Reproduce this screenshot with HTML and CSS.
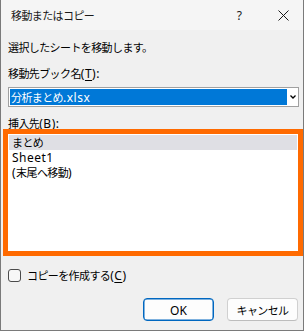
FILE: index.html
```html
<!DOCTYPE html>
<html lang="ja">
<head>
    <meta charset="UTF-8">
    <meta name="viewport" content="width=device-width, initial-scale=1.0">
    <title>移動またはコピー</title>
    <link rel="stylesheet" href="styles.css">
</head>
<body>
    <div class="dialog">
        <div class="titlebar">
            <span class="title">移動またはコピー</span>
            <span class="help">?</span>
            <svg class="close" width="11" height="11" viewBox="0 0 11 11">
                <path d="M0.5 0.5 L10.5 10.5 M10.5 0.5 L0.5 10.5" stroke="#1a1a1a" stroke-width="1" fill="none"/>
            </svg>
        </div>

        <div class="content">
            <p class="msg">選択したシートを移動します。</p>

            <div class="field-label">移動先ブック名<span class="lat">(<u>T</u>):</span></div>
            <div class="select">
                <span class="select-value">分析まとめ<span class="lat">.xlsx</span></span>
                <span class="select-arrow">
                    <svg width="6" height="4" viewBox="0 0 6 4">
                        <path d="M0.5 0.5 L3 3 L5.5 0.5" stroke="#000" stroke-width="1.3" fill="none"/>
                    </svg>
                </span>
            </div>

            <div class="field-label">挿入先<span class="lat">(<u>B</u>):</span></div>
            <ul class="listbox">
                <li class="selected">まとめ</li>
                <li><span class="lat">Sheet1</span></li>
                <li><span class="lat">(</span>末尾へ移動<span class="lat">)</span></li>
            </ul>

            <label class="check">
                <span class="box"></span>
                <span>コピーを作成する<span class="lat">(<u>C</u>)</span></span>
            </label>

            <div class="buttons">
                <button class="btn primary"><span class="lat">OK</span></button>
                <button class="btn">キャンセル</button>
            </div>
        </div>
    </div>
</body>
</html>
```

FILE: styles.css
```css
body {
    margin: 0;
    font-family: "Noto Sans CJK JP", sans-serif;
    font-size: 11px;
    letter-spacing: -0.6px;
    color: #000;
}

.dialog {
    width: 304px;
    height: 331px;
    box-sizing: border-box;
    background-color: #f0f0f0;
    border: 1px solid #7a7a7a;
    border-top: none;
    overflow: hidden;
}

.lat {
    font-family: "Noto Sans", sans-serif;
    font-size: 12px;
    letter-spacing: 0.5px;
    line-height: 15px;
}

.titlebar {
    display: flex;
    align-items: center;
    height: 30px;
    background-color: #f5f5f5;
    padding-left: 10px;
}

.title {
    flex: 1;
    color: #1a1a1a;
}

.help {
    font-family: "Noto Sans", sans-serif;
    font-size: 12px;
    letter-spacing: 0;
    margin-right: 36px;
    color: #1a1a1a;
}

.close {
    margin-right: 14px;
}

.content {
    padding: 0 4px 0 7px;
}

.msg {
    margin: 10px 0 11px;
    line-height: 15px;
}

.field-label {
    line-height: 15px;
}

.field-label u,
.check u {
    text-underline-offset: 2px;
}

.select {
    display: flex;
    height: 20px;
    box-sizing: border-box;
    margin: 6px 0 9px;
    padding: 1px;
    border: 1px solid #a0a0a0;
    background-color: #fff;
}

.select-value {
    flex: 1;
    background-color: #0078d7;
    color: #fff;
    line-height: 16px;
    padding-left: 1px;
}

.select-arrow {
    width: 9px;
    display: flex;
    align-items: center;
    justify-content: center;
    padding-left: 1px;
}

.listbox {
    list-style: none;
    margin: 3px 1px 0 0;
    padding: 1px;
    height: 117px;
    box-sizing: border-box;
    background-color: #fff;
    outline: 5px solid #ff6a00;
}

.listbox li {
    height: 15px;
    line-height: 15px;
    padding-left: 3px;
}

.listbox li.selected {
    background-color: #dfdfe4;
}

.check {
    display: flex;
    align-items: center;
    gap: 6px;
    margin-top: 17px;
    line-height: 15px;
}

.box {
    width: 13px;
    height: 13px;
    box-sizing: border-box;
    border: 1px solid #4a4a4a;
    border-radius: 3px;
    background-color: #f7f7f7;
}

.buttons {
    display: flex;
    justify-content: flex-end;
    gap: 13px;
    margin: 15px 1px 0 0;
}

.btn {
    width: 71px;
    height: 23px;
    font-family: "Noto Sans CJK JP", sans-serif;
    font-size: 11px;
    letter-spacing: -0.6px;
    color: #000;
    background-color: #fdfdfd;
    border: 1px solid #d0d0d0;
    border-bottom-color: #bdbdbd;
    border-radius: 4px;
    padding: 0;
}

.btn.primary {
    border: 1px solid #0067c0;
    box-shadow: inset 0 0 0 0.5px #0067c0;
}

.btn .lat {
    letter-spacing: 0;
}
```
